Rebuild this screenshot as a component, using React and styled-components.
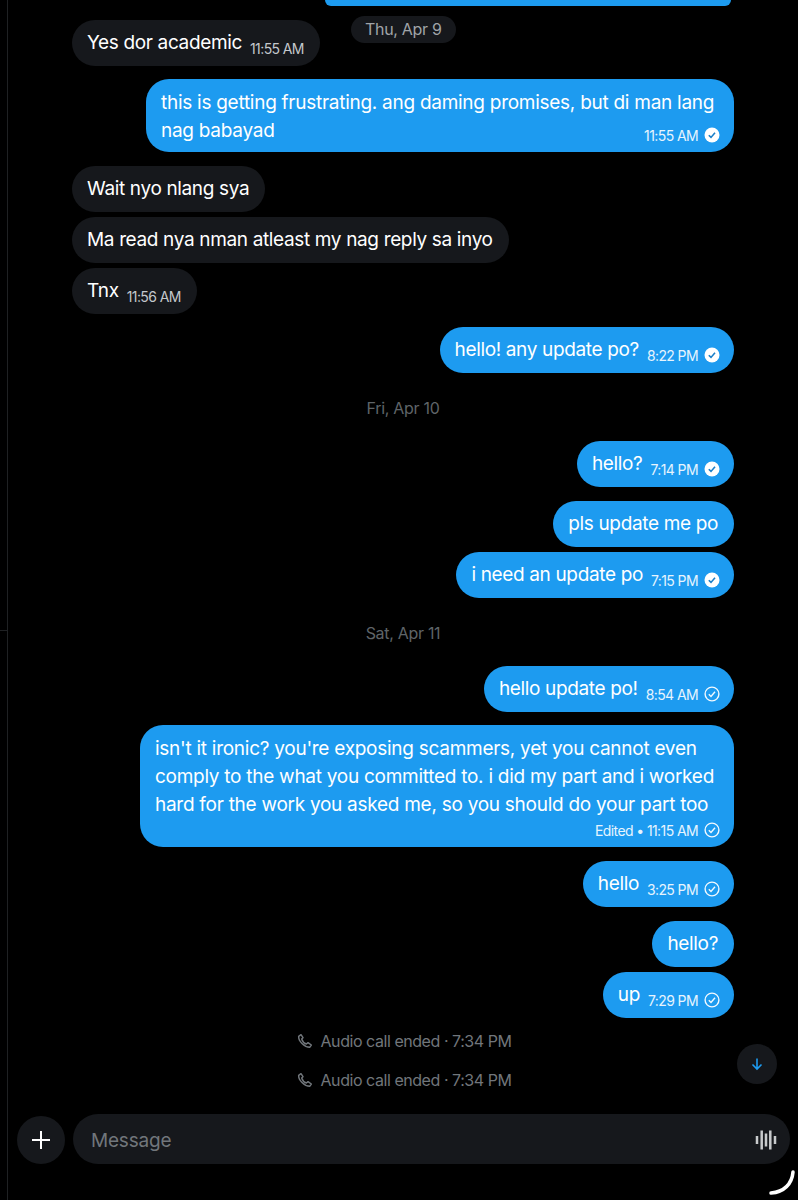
import React from "react";
import styled, { createGlobalStyle } from "styled-components";

const GlobalStyle = createGlobalStyle`
  html, body {
    margin: 0;
    background: #000;
  }
  body {
    font-family: Inter, "Liberation Sans", sans-serif;
  }
`;

const CheckIcon = ({ filled }) =>
  filled ? (
    <svg width="16" height="16" viewBox="0 0 16 16">
      <circle cx="8" cy="8" r="7.5" fill="#fff" />
      <path d="M4.800 8.200l2.200 2.200 4-4.600" fill="none" stroke="#1a7fc8" strokeWidth="1.600" />
    </svg>
  ) : (
    <svg width="16" height="16" viewBox="0 0 16 16">
      <circle cx="8" cy="8" r="6.900" fill="none" stroke="#f2f9fe" strokeWidth="1.400" />
      <path d="M4.800 8.200l2.200 2.200 4-4.600" fill="none" stroke="#f2f9fe" strokeWidth="1.400" />
    </svg>
  );

const PhoneIcon = () => (
  <svg width="16" height="16" viewBox="0 0 24 24" fill="none" stroke="#71767b" strokeWidth="2.200" strokeLinejoin="round">
    <path d="M6 2.500L2.500 5c-.6 7 8.500 16.500 16.500 16.500l2.500-3.500-5-3.500-2.500 2c-3-1-6-4.500-7-7.500l2-2z" />
  </svg>
);

const Wave = () => (
  <svg width="22" height="22" viewBox="0 0 22 22" stroke="#c8cacc" strokeWidth="2.500">
    <path d="M2 7v8M6.700 1.500v19M11 4.500v13M15.300 1.500v19M20 7v8" />
  </svg>
);

const Bubble = ({ mine, text, time, check, top }) => (
  <BubbleRow $mine={mine} $top={top}>
    <BubbleBody $mine={mine} $check={Boolean(check)}>
      <BubbleText>{text}</BubbleText>
      {time && (
        <Meta $mine={mine}>
          {time}
          {check && <CheckIcon filled={check === "filled"} />}
        </Meta>
      )}
    </BubbleBody>
  </BubbleRow>
);

const App = () => (
  <Page>
    <GlobalStyle />
    <SideRule />
    <RuleTick />
    <Thread>
      <TopBubble />
      <DateChip>Thu, Apr 9</DateChip>
      <Bubble text="Yes dor academic" time="11:55 AM" top={14} />
      <BubbleRow $mine $top={13}>
        <LongBubble $w={588} $bottom={7}>
          <LongText>this is getting frustrating. ang daming promises, but di man lang</LongText>
          <LastLine>
            <LongText>nag babayad</LongText>
            <LongMeta $top={8}>
              11:55 AM
              <CheckIcon filled />
            </LongMeta>
          </LastLine>
        </LongBubble>
      </BubbleRow>
      <Bubble text="Wait nyo nlang sya" top={14} />
      <Bubble text="Ma read nya nman atleast my nag reply sa inyo" top={5} />
      <Bubble text="Tnx" time="11:56 AM" top={5} />
      <Bubble mine text="hello! any update po?" time="8:22 PM" check="filled" top={13} />
      <DateLine $top={23}>Fri, Apr 10</DateLine>
      <Bubble mine text="hello?" time="7:14 PM" check="filled" top={21} />
      <Bubble mine text="pls update me po" top={14} />
      <Bubble mine text="i need an update po" time="7:15 PM" check="filled" top={5} />
      <DateLine $top={23}>Sat, Apr 11</DateLine>
      <Bubble mine text="hello update po!" time="8:54 AM" check="outline" top={21} />
      <BubbleRow $mine $top={13}>
        <LongBubble $w={594} $bottom={8}>
          <LongText>
            isn't it ironic? you're exposing scammers, yet you cannot even comply to the what you committed to. i did my part and i worked hard for the work you asked me, so you should do your part too
          </LongText>
          <LastLine $end>
            <LongMeta $top={2}>
              Edited • 11:15 AM
              <CheckIcon />
            </LongMeta>
          </LastLine>
        </LongBubble>
      </BubbleRow>
      <Bubble mine text="hello" time="3:25 PM" check="outline" top={14} />
      <Bubble mine text="hello?" top={14} />
      <Bubble mine text="up" time="7:29 PM" check="outline" top={5} />
      <CallLine $top={11}>
        <PhoneIcon />
        Audio call ended · 7:34 PM
      </CallLine>
      <CallLine $top={15}>
        <PhoneIcon />
        Audio call ended · 7:34 PM
      </CallLine>
    </Thread>
    <ScrollDown>
      <svg width="14" height="14" viewBox="0 0 14 14" fill="none" stroke="#1d9bf0" strokeWidth="1.600">
        <path d="M7 1.500v10.500M2.500 7.500L7 12l4.500-4.500" />
      </svg>
    </ScrollDown>
    <Composer>
      <PlusButton>
        <svg width="18" height="18" viewBox="0 0 18 18" stroke="#fff" strokeWidth="2">
          <path d="M9 0v18M0 9h18" />
        </svg>
      </PlusButton>
      <MessageBox>
        <Placeholder>Message</Placeholder>
        <Wave />
      </MessageBox>
    </Composer>
    <CornerArc width="30" height="32" viewBox="0 0 30 32" fill="none" stroke="#fff" strokeWidth="3.500" strokeLinecap="round">
      <path d="M27 5c-1 12-9 20-22 21" />
    </CornerArc>
  </Page>
);

export default App;

const Page = styled.div`
  position: relative;
  width: 798px;
  height: 1200px;
  overflow: hidden;
  background: #000;
`;

const SideRule = styled.div`
  position: absolute;
  left: 7px;
  top: 0;
  bottom: 0;
  width: 1px;
  background: #1f2123;
`;

const RuleTick = styled.div`
  position: absolute;
  left: 0;
  top: 630px;
  width: 8px;
  height: 1px;
  background: #1f2123;
`;

const Thread = styled.div`
  display: flex;
  flex-direction: column;
  padding: 0 64px 0 72px;
`;

const TopBubble = styled.div`
  align-self: flex-end;
  width: 406px;
  height: 6px;
  margin-right: 3px;
  background: #1d9bf0;
  border-radius: 0 0 16px 16px;
`;

const DateChip = styled.div`
  position: absolute;
  left: 351px;
  top: 16px;
  height: 27px;
  box-sizing: border-box;
  padding: 0 14px 1px;
  display: flex;
  align-items: center;
  border-radius: 14px;
  background: #16181c;
  color: #a0a4a8;
  font-size: 16px;
  letter-spacing: -0.3px;
`;

const BubbleRow = styled.div`
  display: flex;
  justify-content: ${(p) => (p.$mine ? "flex-end" : "flex-start")};
  margin-top: ${(p) => p.$top}px;
`;

const BubbleBody = styled.div`
  height: 46px;
  box-sizing: border-box;
  padding: 0 ${(p) => (p.$check ? 14 : 16)}px 0 15px;
  display: flex;
  align-items: center;
  gap: 8px;
  border-radius: 23px;
  color: #fff;
  background: ${(p) => (p.$mine ? "#1d9bf0" : "#16181c")};
`;

const BubbleText = styled.span`
  font-size: 19px;
  letter-spacing: -0.35px;
  line-height: 24px;
  white-space: nowrap;
`;

const Meta = styled.span`
  display: flex;
  align-items: center;
  gap: 6px;
  margin-top: 10px;
  font-size: 14px;
  letter-spacing: -0.6px;
  white-space: nowrap;
  color: ${(p) => (p.$mine ? "#e6f4fe" : "#c4c8cc")};
`;

const LongBubble = styled.div`
  width: ${(p) => p.$w}px;
  box-sizing: border-box;
  padding: 10px 14px ${(p) => p.$bottom}px 15px;
  border-radius: 23px;
  background: #1d9bf0;
  color: #fff;
`;

const LongText = styled.div`
  font-size: 19px;
  letter-spacing: -0.27px;
  line-height: 28px;
`;

const LastLine = styled.div`
  display: flex;
  justify-content: ${(p) => (p.$end ? "flex-end" : "space-between")};
  align-items: center;
`;

const LongMeta = styled.div`
  display: flex;
  align-items: center;
  gap: 6px;
  height: 18px;
  margin-top: ${(p) => p.$top}px;
  font-size: 14px;
  letter-spacing: -0.6px;
  color: #e6f4fe;
`;

const DateLine = styled.div`
  margin-top: ${(p) => p.$top}px;
  height: 24px;
  text-align: center;
  line-height: 24px;
  font-size: 16px;
  letter-spacing: -0.3px;
  color: #5f6468;
`;

const CallLine = styled.div`
  display: flex;
  justify-content: center;
  align-items: center;
  gap: 8px;
  margin-top: ${(p) => p.$top}px;
  padding-left: 2px;
  height: 24px;
  font-size: 16px;
  letter-spacing: -0.45px;
  color: #71767b;
`;

const ScrollDown = styled.div`
  position: absolute;
  left: 737px;
  top: 1044px;
  width: 40px;
  height: 40px;
  display: flex;
  align-items: center;
  justify-content: center;
  border-radius: 50%;
  background: #16181c;
`;

const Composer = styled.div`
  position: absolute;
  left: 17px;
  right: 8px;
  top: 1114px;
  display: flex;
  align-items: flex-end;
  gap: 8px;
`;

const PlusButton = styled.div`
  flex: none;
  width: 48px;
  height: 48px;
  display: flex;
  align-items: center;
  justify-content: center;
  border-radius: 50%;
  background: #16181c;
`;

const MessageBox = styled.div`
  flex: 1;
  height: 50px;
  box-sizing: border-box;
  padding: 2px 13px 0 18px;
  display: flex;
  align-items: center;
  justify-content: space-between;
  border-radius: 25px;
  background: #16181c;
`;

const Placeholder = styled.span`
  font-size: 19px;
  letter-spacing: -0.2px;
  color: #71767b;
`;

const CornerArc = styled.svg`
  position: absolute;
  left: 766px;
  top: 1167px;
`;
